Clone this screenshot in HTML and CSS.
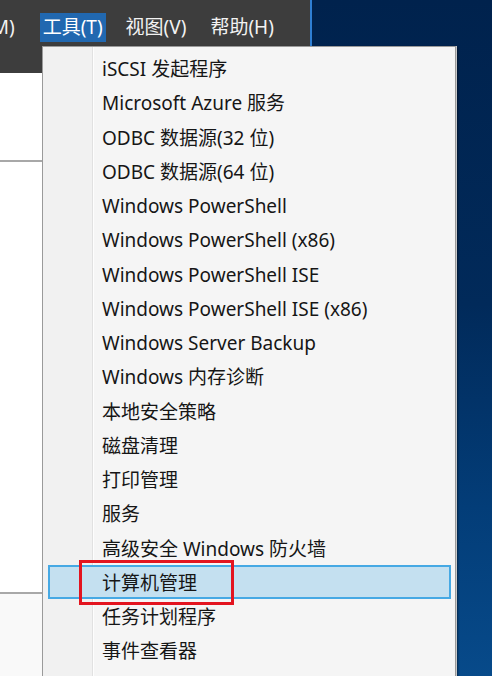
FILE: index.html
```html
<!DOCTYPE html>
<html lang="zh-CN">
<head>
<meta charset="utf-8">
<title>服务器管理器 - 工具</title>
<link rel="stylesheet" href="styles.css">
</head>
<body>
<div class="screen">
  <div class="window">
    <div class="menubar">
      <span class="mitem cut">管理(M)</span>
      <span class="mitem active">工具(T)</span>
      <span class="mitem">视图(V)</span>
      <span class="mitem">帮助(H)</span>
    </div>
    <div class="toolstrip"></div>
    <div class="content">
      <div class="pane">
        <div class="sec sec1"></div>
        <div class="sec sec2"></div>
        <div class="sec sec3"></div>
      </div>
      <div class="main"></div>
    </div>
  </div>
  <div class="desktop"></div>
</div>

<ul class="dropdown">
  <li class="item">iSCSI 发起程序</li>
  <li class="item">Microsoft Azure 服务</li>
  <li class="item">ODBC 数据源(32 位)</li>
  <li class="item">ODBC 数据源(64 位)</li>
  <li class="item">Windows PowerShell</li>
  <li class="item">Windows PowerShell (x86)</li>
  <li class="item">Windows PowerShell ISE</li>
  <li class="item">Windows PowerShell ISE (x86)</li>
  <li class="item">Windows Server Backup</li>
  <li class="item">Windows 内存诊断</li>
  <li class="item">本地安全策略</li>
  <li class="item">磁盘清理</li>
  <li class="item">打印管理</li>
  <li class="item">服务</li>
  <li class="item">高级安全 Windows 防火墙</li>
  <li class="item hover">计算机管理<span class="callout"></span></li>
  <li class="item">任务计划程序</li>
  <li class="item">事件查看器</li>
</ul>
</body>
</html>
```

FILE: styles.css
```css
* { box-sizing: border-box; }
html, body { margin: 0; padding: 0; }
body {
  width: 492px;
  height: 676px;
  overflow: hidden;
  font-family: "Noto Sans", "Noto Sans CJK SC", sans-serif;
  position: relative;
}
.screen {
  display: flex;
  height: 676px;
}
.window {
  width: 312px;
  border-right: 2px solid #2f7fd3;
  display: flex;
  flex-direction: column;
  background: #ffffff;
}
.menubar {
  height: 46px;
  background: #3d3d3d;
  display: flex;
  align-items: flex-start;
  padding-top: 13px;
  color: #f2f2f2;
  font-size: 19px;
  white-space: nowrap;
  overflow: hidden;
}
.mitem {
  height: 29px;
  line-height: 28px;
  padding: 0 3px;
  margin-right: 18px;
}
.mitem.cut {
  margin-left: -55px;
  margin-right: 22px;
}
.mitem.active {
  background: #2168b0;
  color: #ffffff;
  padding: 0 3px;
  margin-right: 17px;
}
.toolstrip {
  height: 27px;
  background: #3d3d3d;
}
.content {
  flex: 1;
  display: flex;
}
.pane {
  width: 44px;
  border-right: 2px solid #a8a8a8;
  display: flex;
  flex-direction: column;
}
.sec1 {
  height: 89px;
  background: #ffffff;
  border-bottom: 2px solid #a8a8a8;
}
.sec2 {
  height: 432px;
  background: #ffffff;
  border-bottom: 2px solid #a8a8a8;
}
.sec3 {
  flex: 1;
  background: #f9f9f9;
}
.main {
  flex: 1;
  background: #f4f4f4;
}
.desktop {
  flex: 1;
  background: linear-gradient(180deg, #00224d 0%, #012a5a 45%, #033d78 75%, #074a8a 100%);
}

.dropdown {
  position: absolute;
  left: 42px;
  top: 46px;
  width: 414px;
  height: 660px;
  margin: 0;
  padding: 4px 4px 0 5px;
  list-style: none;
  border: 1px solid #9a9a9a;
  box-shadow: 1px 0 0 #c8c8c8, 2px 1px 2px rgba(0,0,0,0.45);
  background: linear-gradient(90deg, #f1f1f1 0, #f1f1f1 49px, #e1e1e1 49px, #e1e1e1 50px, #fdfdfd 50px, #fdfdfd 51px, #f5f5f5 51px);
  font-size: 19px;
  color: #161616;
}
.item {
  height: 34.25px;
  line-height: 32px;
  padding-left: 52px;
  border: 2px solid transparent;
  white-space: nowrap;
  position: relative;
}
.item.hover {
  background: #c4e0f0;
  border-color: #46a9e4;
}
.callout {
  position: absolute;
  left: 29px;
  top: -7px;
  width: 155px;
  height: 45px;
  border: 3px solid #e3141f;
}
```
